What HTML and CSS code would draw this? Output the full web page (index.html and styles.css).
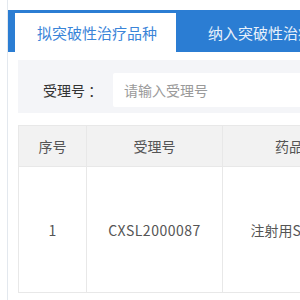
FILE: index.html
```html
<!DOCTYPE html>
<html lang="zh-CN">
<head>
<meta charset="UTF-8">
<title>突破性治疗品种</title>
<link rel="stylesheet" href="styles.css">
</head>
<body>
<div class="page">
  <div class="tabs">
    <div class="tab active">拟突破性治疗品种</div>
    <div class="tab">纳入突破性治疗品种</div>
  </div>

  <div class="content">
    <div class="search">
      <label class="search-label">受理号 ：</label>
      <input class="search-input" type="text" placeholder="请输入受理号">
    </div>

    <table class="grid">
      <thead>
        <tr>
          <th class="col-no">序号</th>
          <th class="col-code">受理号</th>
          <th class="col-name">药品名称</th>
        </tr>
      </thead>
      <tbody>
        <tr>
          <td>1</td>
          <td class="code">CXSL2000087</td>
          <td>注射用SHR-1316</td>
        </tr>
      </tbody>
    </table>
  </div>
</div>
</body>
</html>
```

FILE: styles.css
```css
body {
  margin: 0;
  background-color: #fff;
  font-family: "Noto Sans CJK SC", "Noto Sans", sans-serif;
  overflow: hidden;
}

.page {
  margin-left: 7px;
  border-left: 1px solid #e3e8ee;
  padding-top: 10px;
  min-height: 300px;
  width: 600px;
}

.tabs {
  display: flex;
  height: 42px;
  background-color: #2b7dd3;
  padding-left: 7px;
  white-space: nowrap;
}

.tab {
  font-size: 15px;
  line-height: 39px;
  color: #e8f1fb;
  padding: 0 32px;
  margin-top: 3px;
}

.tab.active {
  background-color: #fff;
  color: #3a84d8;
  padding: 0 19px 0 22px;
}

.content {
  padding-left: 10px;
}

.search {
  display: flex;
  align-items: center;
  margin-top: 8px;
  padding: 13px 0 6px 25px;
  background-color: #f4f5f8;
}

.search-label {
  font-size: 14px;
  color: #333;
  width: 70px;
  white-space: nowrap;
}

.search-input {
  width: 300px;
  height: 34px;
  box-sizing: border-box;
  border: none;
  border-radius: 2px;
  background-color: #fff;
  padding: 0 11px;
  font-family: inherit;
  font-size: 14px;
  color: #333;
}

.search-input::placeholder {
  color: #9a9a9a;
}

.grid {
  margin-top: 12px;
  border-collapse: collapse;
  font-size: 14px;
}

.grid th,
.grid td {
  border: 1px solid #e8e8e8;
  text-align: center;
  padding: 0;
}

.grid th {
  height: 40px;
  background-color: #f2f2f2;
  color: #555;
  font-weight: normal;
}

.grid td {
  height: 125px;
  color: #555;
}

.grid .code {
  letter-spacing: 0.5px;
}

.col-no {
  width: 67px;
}

.col-code {
  width: 135px;
}

.col-name {
  width: 160px;
}
```
